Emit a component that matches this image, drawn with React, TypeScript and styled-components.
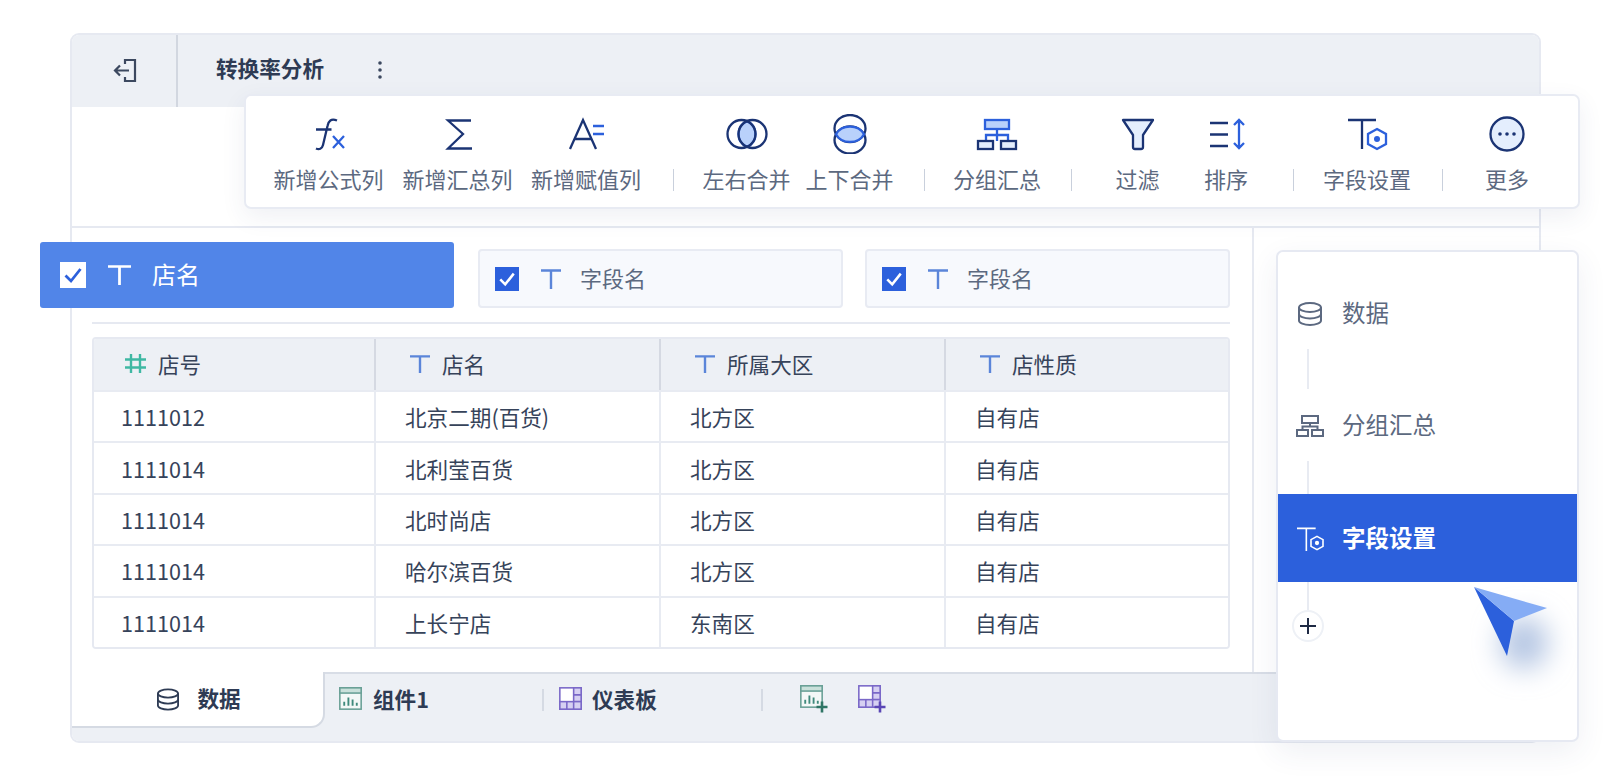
import styled, { createGlobalStyle } from "styled-components"

const NAVY = "#1b3474"
const BLUE = "#2c60dc"
const LIGHT = "#b9d1fb"
const PALE = "#e4eefd"

const GlobalStyle = createGlobalStyle`
html, body {
    margin: 0;
    background: #fff;
    font-family: "Noto Sans CJK SC", "Noto Sans", sans-serif;
}
* {
    box-sizing: border-box;
}
`

const Page = styled.div`
width: 1612px;
height: 776px;
padding: 33px 0 0 70px;
overflow: hidden;
`

const Window = styled.div`
position: relative;
width: 1471px;
height: 710px;
border: 2px solid #e6e9f1;
border-radius: 9px;
display: flex;
flex-direction: column;
`

const Header = styled.header`
height: 72px;
flex: none;
background: #edf0f5;
border-radius: 7px 7px 0 0;
display: flex;
align-items: center;
`

const BackButton = styled.div`
width: 106px;
height: 100%;
border-right: 2px solid #d2d7e0;
display: flex;
align-items: center;
justify-content: center;
padding: 0 0 2px 2px;
`

const Title = styled.h1`
margin: 0 0 6px 38px;
font-size: 21.6px;
font-weight: 700;
color: #2e3b54;
line-height: 30px;
`

const KebabIcon = styled.svg`
margin: 0 0 2px 54px;
`

const Blank = styled.div`
height: 121px;
flex: none;
border-bottom: 2px solid #e6e9f1;
`

const Body = styled.div`
flex: 1;
display: flex;
min-height: 0;
`

const Main = styled.main`
width: 1180px;
flex: none;
padding: 14px 22px 0 20px;
`

const Rail = styled.div`
flex: 1;
border-left: 2px solid #e6e9f1;
`

const FieldRow = styled.div`
display: flex;
align-items: flex-end;
margin-left: -52px;
height: 66px;
`

const ActiveField = styled.div`
width: 414px;
height: 66px;
flex: none;
margin-right: 2px;
background: #5185e8;
border-radius: 3px;
display: flex;
align-items: center;
padding-left: 20px;
color: #fff;
font-size: 24px;
`

const Field = styled.div`
width: 365px;
height: 59px;
flex: none;
margin-left: 22px;
background: #f7f9fd;
border: 2px solid #e8ebf3;
border-radius: 4px;
display: flex;
align-items: center;
padding-left: 15px;
color: #5c6980;
font-size: 22px;
`

const CheckBox = styled.span<{ $size: number; $inverted?: boolean }>`
width: ${p => p.$size}px;
height: ${p => p.$size}px;
flex: none;
background: ${p => (p.$inverted ? "#fff" : BLUE)};
display: flex;
align-items: center;
justify-content: center;
`

const FieldMark = styled.span<{ $gap: number }>`
margin-left: ${p => p.$gap}px;
display: flex;
`

const FieldName = styled.span<{ $gap: number }>`
margin: 0 0 3px ${p => p.$gap}px;
line-height: 30px;
`

const Divider = styled.div`
height: 2px;
background: #e6e9f1;
margin: 14px 0 13px;
`

const Table = styled.div`
height: 312px;
border: 2px solid #e6e9f1;
border-radius: 4px;
display: flex;
flex-direction: column;
overflow: hidden;
`

const TableRow = styled.div<{ $head?: boolean }>`
display: grid;
grid-template-columns: 280px 285px 285px 1fr;
flex: ${p => (p.$head ? "none" : 1)};
height: ${p => (p.$head ? "53px" : "auto")};
background: ${p => (p.$head ? "#edf0f5" : "#fff")};
border-bottom: 2px solid #e8ebf2;

&:last-child {
    border-bottom: none;
}
`

const Cell = styled.div<{ $head?: boolean }>`
display: flex;
align-items: center;
padding-left: ${p => (p.$head ? 34 : 29)}px;
padding-bottom: ${p => (p.$head ? 2 : 0)}px;
font-size: 21.6px;
color: #36435a;
border-left: 2px solid ${p => (p.$head ? "#d5d9e2" : "#e8ebf2")};

&:first-child {
    border-left: none;
    padding-left: ${p => (p.$head ? 31 : 27)}px;
}
`

const HeadLabel = styled.span`
margin-left: 12px;
`

const TabBar = styled.nav`
height: 69px;
flex: none;
background: #edf0f5;
border-top: 2px solid #d8dde6;
border-radius: 0 0 7px 7px;
display: flex;
align-items: flex-start;
font-size: 21.6px;
font-weight: 700;
color: #2e3b54;
`

const ActiveTab = styled.div`
width: 253px;
height: 56px;
margin-top: -2px;
padding-left: 3px;
background: #fff;
border-right: 2px solid #d5dae3;
border-bottom: 2px solid #d5dae3;
border-radius: 0 0 14px 0;
display: flex;
align-items: center;
justify-content: center;
gap: 18px;
`

const ActiveTabLabel = styled.span`
margin-bottom: 3px;
`

const TabItem = styled.div<{ $left: number; $gap?: number }>`
height: 49px;
margin-left: ${p => p.$left}px;
display: flex;
align-items: center;
gap: ${p => p.$gap ?? 11}px;
`

const TabSep = styled.div<{ $left: number }>`
width: 2px;
height: 22px;
margin: 15px 0 0 ${p => p.$left}px;
background: #d5dae3;
`

const Toolbar = styled.div`
position: absolute;
left: 172px;
top: 59px;
width: 1336px;
height: 115px;
background: #fff;
border: 2px solid #e8ebf3;
border-radius: 7px;
box-shadow: 0 8px 24px rgba(45, 65, 110, 0.08);
display: flex;
padding: 18px 0 0 18px;
`

const ToolItem = styled.div<{ $width: number }>`
width: ${p => p.$width}px;
flex: none;
display: flex;
flex-direction: column;
align-items: center;
`

const ToolLabel = styled.span`
margin-top: 12px;
font-size: 22px;
line-height: 24px;
color: #5c6980;
white-space: nowrap;
`

const ToolSep = styled.div`
width: 1px;
height: 22px;
margin: 55px 21px 0 23px;
background: #c9d0dc;
flex: none;
`

const SidePanel = styled.aside`
position: absolute;
left: 1204px;
top: 215px;
width: 303px;
height: 492px;
background: #fff;
border: 2px solid #e6e9f2;
border-radius: 7px;
box-shadow: 0 10px 30px rgba(45, 65, 110, 0.08);
padding-top: 25px;
display: flex;
flex-direction: column;
`

const Step = styled.div<{ $height: number; $active?: boolean }>`
height: ${p => p.$height}px;
flex: none;
display: flex;
align-items: center;
padding-left: 18px;
gap: 18px;
font-size: 23.5px;
font-weight: ${p => (p.$active ? 700 : 400)};
color: ${p => (p.$active ? "#fff" : "#5c6980")};
background: ${p => (p.$active ? BLUE : "transparent")};
`

const StepIcon = styled.span`
width: 28px;
flex: none;
display: flex;
justify-content: center;
margin-top: 2px;
`

const StepLabel = styled.span`
margin-bottom: 2px;
`

const Connector = styled.div<{ $height: number }>`
width: 2px;
height: ${p => p.$height}px;
margin-left: 29px;
background: #e8ebf2;
flex: none;
`

const AddButton = styled.div`
width: 32px;
height: 32px;
margin-left: 14px;
background: #fff;
border: 2px solid #eef1f6;
border-radius: 50%;
display: flex;
align-items: center;
justify-content: center;
`

const Cursor = styled.svg`
position: absolute;
left: 192px;
top: 333px;
`

const PlusIconBox = styled.svg`
margin-top: 1px;
`

function BackIcon() {
    return (
        <svg width="24" height="25" viewBox="0 0 24 25" fill="none" stroke="#3c485f" strokeWidth="2.2">
            <path d="M12 6V2H22V23H12V19" />
            <path d="M16 12.5H2M7 7.5L2 12.5L7 17.5" />
        </svg>
    )
}

function TextIcon({ width, height, color }: { width: number; height: number; color: string }) {
    return (
        <svg width={width} height={height} viewBox="0 0 20 20" preserveAspectRatio="none" fill="none" stroke={color} strokeWidth="2.4">
            <path d="M0 1.5H20M10 1.5V20" />
        </svg>
    )
}

function HashIcon() {
    return (
        <svg width="21" height="19" viewBox="0 0 21 19" fill="none" stroke="#3fb8a3" strokeWidth="2.4">
            <path d="M6 0V19M15 0V19M0 5.5H21M0 13.5H21" />
        </svg>
    )
}

function CheckMark({ color, size }: { color: string; size: number }) {
    return (
        <svg width={size} height={size} viewBox="0 0 20 20" fill="none" stroke={color} strokeWidth="2.8">
            <path d="M2.500 10.500L8 16L17.500 4" />
        </svg>
    )
}

function DatabaseIcon({ color, width, height }: { color: string; width: number; height: number }) {
    return (
        <svg width={width} height={height} viewBox="0 0 24 24" fill="none" stroke={color} strokeWidth="2">
            <ellipse cx="12" cy="5.5" rx="11" ry="4.5" />
            <path d="M1 5.5V18.5C1 21 6 23 12 23S23 21 23 18.5V5.5" />
            <path d="M1 12C1 14.5 6 16.5 12 16.5S23 14.5 23 12" />
        </svg>
    )
}

function GroupOutline() {
    return (
        <svg width="28" height="22" viewBox="0 0 28 22" fill="none" stroke="#5c6980" strokeWidth="2">
            <rect x="6" y="1" width="16" height="7" />
            <rect x="1" y="15" width="11" height="6" />
            <rect x="16" y="15" width="11" height="6" />
            <path d="M14 8V11.500H6.500V15M14 11.500H21.500V15" />
        </svg>
    )
}

function FieldSetIcon({ color }: { color: string }) {
    return (
        <svg width="28" height="24" viewBox="0 0 41 36" fill="none" strokeWidth="2.4" stroke={color}>
            <path d="M1 2H29M15 2V36" />
            <path d="M31 14L40 19V29L31 34L22 29V19Z" />
            <circle cx="31" cy="24" r="3.200" fill={color} stroke="none" />
        </svg>
    )
}

function ToolIcon({ children }: { children: React.ReactNode }) {
    return (
        <svg width="44" height="40" viewBox="0 0 44 40" fill="none" strokeWidth="2.300">
            {children}
        </svg>
    )
}

function ChartIcon({ size = 23 }: { size?: number }) {
    return (
        <svg width={size} height={size} viewBox="0 0 22 22" fill="none">
            <rect x="0.800" y="0.800" width="20.400" height="20.400" fill="#f4f8f7" stroke="#69a096" strokeWidth="1.500" />
            <rect x="0.800" y="0.800" width="20.400" height="5" fill="#c9e0da" stroke="#69a096" strokeWidth="1.500" />
            <path d="M5 18V14M9 18V10M13 18V12M17 18V15" stroke="#3f8a7c" strokeWidth="1.800" />
        </svg>
    )
}

function BoardIcon({ size = 23 }: { size?: number }) {
    return (
        <svg width={size} height={size} viewBox="0 0 22 22" fill="none" stroke="#7a68c8" strokeWidth="1.500">
            <rect x="0.800" y="0.800" width="20.400" height="20.400" fill="#fff" />
            <rect x="14" y="0.800" width="7.200" height="13.200" fill="#d6d0f2" />
            <rect x="0.800" y="14" width="20.400" height="7.200" fill="#d6d0f2" />
            <path d="M14 7.500H21M7.500 14V21M14 14V21" />
        </svg>
    )
}

function WithPlus({ color, children }: { color: string; children: React.ReactNode }) {
    return (
        <PlusIconBox width="29" height="29" viewBox="0 0 29 29" fill="none">
            {children}
            <path d="M22 16.500V27.500M16.500 22H27.500" stroke={color} strokeWidth="2.600" />
        </PlusIconBox>
    )
}

const tools = [
    {
        label: "新增公式列",
        width: 129,
        icon: (
            <>
                <path d="M30 6.500C24 4 21.500 7 20.500 12L16 31C15 35 12 36 9 34.500M9 15.500H24.500" stroke={NAVY} />
                <path d="M26 22L37 34M37 22L26 34" stroke={BLUE} />
            </>
        ),
    },
    {
        label: "新增汇总列",
        width: 129,
        icon: <path d="M35 6.500H12L27 20L12 34.500H36" stroke={NAVY} />,
    },
    {
        label: "新增赋值列",
        width: 128,
        sepAfter: true,
        icon: (
            <>
                <path d="M6 35L19 6L32 35M10.500 25H27.500" stroke={NAVY} />
                <path d="M29 12H40M29 20H40" stroke={BLUE} />
            </>
        ),
    },
    {
        label: "左右合并",
        width: 103,
        icon: (
            <>
                <path d="M22 7.130A14 14 0 0 1 22 32.870A14 14 0 0 1 22 7.130Z" fill={LIGHT} stroke={BLUE} />
                <circle cx="16.500" cy="20" r="14" stroke={NAVY} />
                <circle cx="27.500" cy="20" r="14" stroke={NAVY} />
            </>
        ),
    },
    {
        label: "上下合并",
        width: 103,
        sepAfter: true,
        icon: (
            <>
                <ellipse cx="22" cy="14.500" rx="15.500" ry="13.500" stroke={NAVY} />
                <ellipse cx="22" cy="26" rx="15.500" ry="13.500" stroke={NAVY} />
                <path d="M8 20.250A15.500 13.500 0 0 1 36 20.250A15.500 13.500 0 0 1 8 20.250Z" fill={LIGHT} stroke={BLUE} />
            </>
        ),
    },
    {
        label: "分组汇总",
        width: 102,
        sepAfter: true,
        icon: (
            <>
                <path d="M22 15V27M11 27V21H33V27" stroke={BLUE} />
                <rect x="10" y="6" width="24" height="9" fill={LIGHT} stroke={BLUE} />
                <rect x="3" y="27" width="15" height="8" fill={PALE} stroke={NAVY} />
                <rect x="26" y="27" width="15" height="8" fill={PALE} stroke={NAVY} />
            </>
        ),
    },
    {
        label: "过滤",
        width: 89,
        icon: (
            <path
                d="M7 6H37L27 21V33C27 34.500 26 35 25 35H19C18 35 17 34.500 17 33V21Z"
                fill={PALE}
                stroke={NAVY}
                strokeLinejoin="round"
            />
        ),
    },
    {
        label: "排序",
        width: 88,
        sepAfter: true,
        icon: (
            <>
                <path d="M6 9H24M6 20.500H24M6 32H24" stroke={NAVY} />
                <path d="M35 6V34M30 11L35 6L40 11M30 29L35 34L40 29" stroke={BLUE} />
            </>
        ),
    },
    {
        label: "字段设置",
        width: 104,
        sepAfter: true,
        icon: (
            <>
                <path d="M3 6H31M17 6V35" stroke={NAVY} />
                <path d="M32 15L41 20V30L32 35L23 30V20Z" stroke={BLUE} />
                <circle cx="32" cy="25" r="3" fill={BLUE} />
            </>
        ),
    },
    {
        label: "更多",
        width: 86,
        icon: (
            <>
                <circle cx="22" cy="20" r="16.500" fill={PALE} stroke={NAVY} />
                <circle cx="15" cy="20" r="1.800" fill={NAVY} />
                <circle cx="22" cy="20" r="1.800" fill={NAVY} />
                <circle cx="29" cy="20" r="1.800" fill={NAVY} />
            </>
        ),
    },
]

const columns = [
    { name: "店号", hash: true },
    { name: "店名" },
    { name: "所属大区" },
    { name: "店性质" },
]

const rows = [
    ["1111012", "北京二期(百货)", "北方区", "自有店"],
    ["1111014", "北利莹百货", "北方区", "自有店"],
    ["1111014", "北时尚店", "北方区", "自有店"],
    ["1111014", "哈尔滨百货", "北方区", "自有店"],
    ["1111014", "上长宁店", "东南区", "自有店"],
]

function Tool({ label, width, icon, sepAfter }: { label: string; width: number; icon: React.ReactNode; sepAfter?: boolean }) {
    return (
        <>
            <ToolItem $width={width}>
                <ToolIcon>{icon}</ToolIcon>
                <ToolLabel>{label}</ToolLabel>
            </ToolItem>
            {sepAfter && <ToolSep />}
        </>
    )
}

export default function App() {
    return (
        <Page>
            <GlobalStyle />
            <Window>
                <Header>
                    <BackButton>
                        <BackIcon />
                    </BackButton>
                    <Title>转换率分析</Title>
                    <KebabIcon width="4" height="18" viewBox="0 0 4 18" fill="#3c485f">
                        <circle cx="2" cy="2" r="1.800" />
                        <circle cx="2" cy="9" r="1.800" />
                        <circle cx="2" cy="16" r="1.800" />
                    </KebabIcon>
                </Header>
                <Blank />
                <Body>
                    <Main>
                        <FieldRow>
                            <ActiveField>
                                <CheckBox $size={26} $inverted>
                                    <CheckMark color={BLUE} size={20} />
                                </CheckBox>
                                <FieldMark $gap={22}>
                                    <TextIcon width={23} height={20} color="#fff" />
                                </FieldMark>
                                <FieldName $gap={21}>店名</FieldName>
                            </ActiveField>
                            <Field>
                                <CheckBox $size={24}>
                                    <CheckMark color="#fff" size={18} />
                                </CheckBox>
                                <FieldMark $gap={22}>
                                    <TextIcon width={20} height={20} color="#5b85d9" />
                                </FieldMark>
                                <FieldName $gap={19}>字段名</FieldName>
                            </Field>
                            <Field>
                                <CheckBox $size={24}>
                                    <CheckMark color="#fff" size={18} />
                                </CheckBox>
                                <FieldMark $gap={22}>
                                    <TextIcon width={20} height={20} color="#5b85d9" />
                                </FieldMark>
                                <FieldName $gap={19}>字段名</FieldName>
                            </Field>
                        </FieldRow>
                        <Divider />
                        <Table>
                            <TableRow $head>
                                {columns.map(col => (
                                    <Cell $head key={col.name}>
                                        {col.hash ? <HashIcon /> : <TextIcon width={20} height={18} color="#5b85d9" />}
                                        <HeadLabel>{col.name}</HeadLabel>
                                    </Cell>
                                ))}
                            </TableRow>
                            {rows.map((row, index) => (
                                <TableRow key={index}>
                                    {row.map((value, i) => (
                                        <Cell key={i}>{value}</Cell>
                                    ))}
                                </TableRow>
                            ))}
                        </Table>
                    </Main>
                    <Rail />
                </Body>
                <TabBar>
                    <ActiveTab>
                        <DatabaseIcon color="#2e3b54" width={22} height={23} />
                        <ActiveTabLabel>数据</ActiveTabLabel>
                    </ActiveTab>
                    <TabItem $left={14}>
                        <ChartIcon />
                        组件1
                    </TabItem>
                    <TabSep $left={113} />
                    <TabItem $left={15} $gap={10}>
                        <BoardIcon />
                        仪表板
                    </TabItem>
                    <TabSep $left={104} />
                    <TabItem $left={37}>
                        <WithPlus color="#2f7565">
                            <ChartIcon size={23} />
                        </WithPlus>
                    </TabItem>
                    <TabItem $left={29}>
                        <WithPlus color="#5a46b5">
                            <BoardIcon size={23} />
                        </WithPlus>
                    </TabItem>
                </TabBar>

                <Toolbar>
                    {tools.map(tool => (
                        <Tool key={tool.label} {...tool} />
                    ))}
                </Toolbar>

                <SidePanel>
                    <Step $height={72}>
                        <StepIcon>
                            <DatabaseIcon color="#5c6980" width={24} height={24} />
                        </StepIcon>
                        <StepLabel>数据</StepLabel>
                    </Step>
                    <Connector $height={40} />
                    <Step $height={72}>
                        <StepIcon>
                            <GroupOutline />
                        </StepIcon>
                        <StepLabel>分组汇总</StepLabel>
                    </Step>
                    <Connector $height={33} />
                    <Step $height={88} $active>
                        <StepIcon>
                            <FieldSetIcon color="#fff" />
                        </StepIcon>
                        <StepLabel>字段设置</StepLabel>
                    </Step>
                    <Connector $height={28} />
                    <AddButton>
                        <svg width="16" height="16" viewBox="0 0 16 16" stroke="#1f2a44" strokeWidth="2">
                            <path d="M8 0V16M0 8H16" />
                        </svg>
                    </AddButton>
                    <Cursor width="130" height="130" viewBox="0 0 130 130" fill="none">
                        <defs>
                            <filter id="cursor-blur" x="-100%" y="-100%" width="300%" height="300%">
                                <feGaussianBlur stdDeviation="14" />
                            </filter>
                        </defs>
                        <ellipse cx="54" cy="58" rx="24" ry="26" fill="#b2c4e2" filter="url(#cursor-blur)" />
                        <path d="M4 2L44 36L37 71Z" fill={BLUE} />
                        <path d="M4 2L77 23L44 36Z" fill="#85acf5" />
                    </Cursor>
                </SidePanel>
            </Window>
        </Page>
    )
}
